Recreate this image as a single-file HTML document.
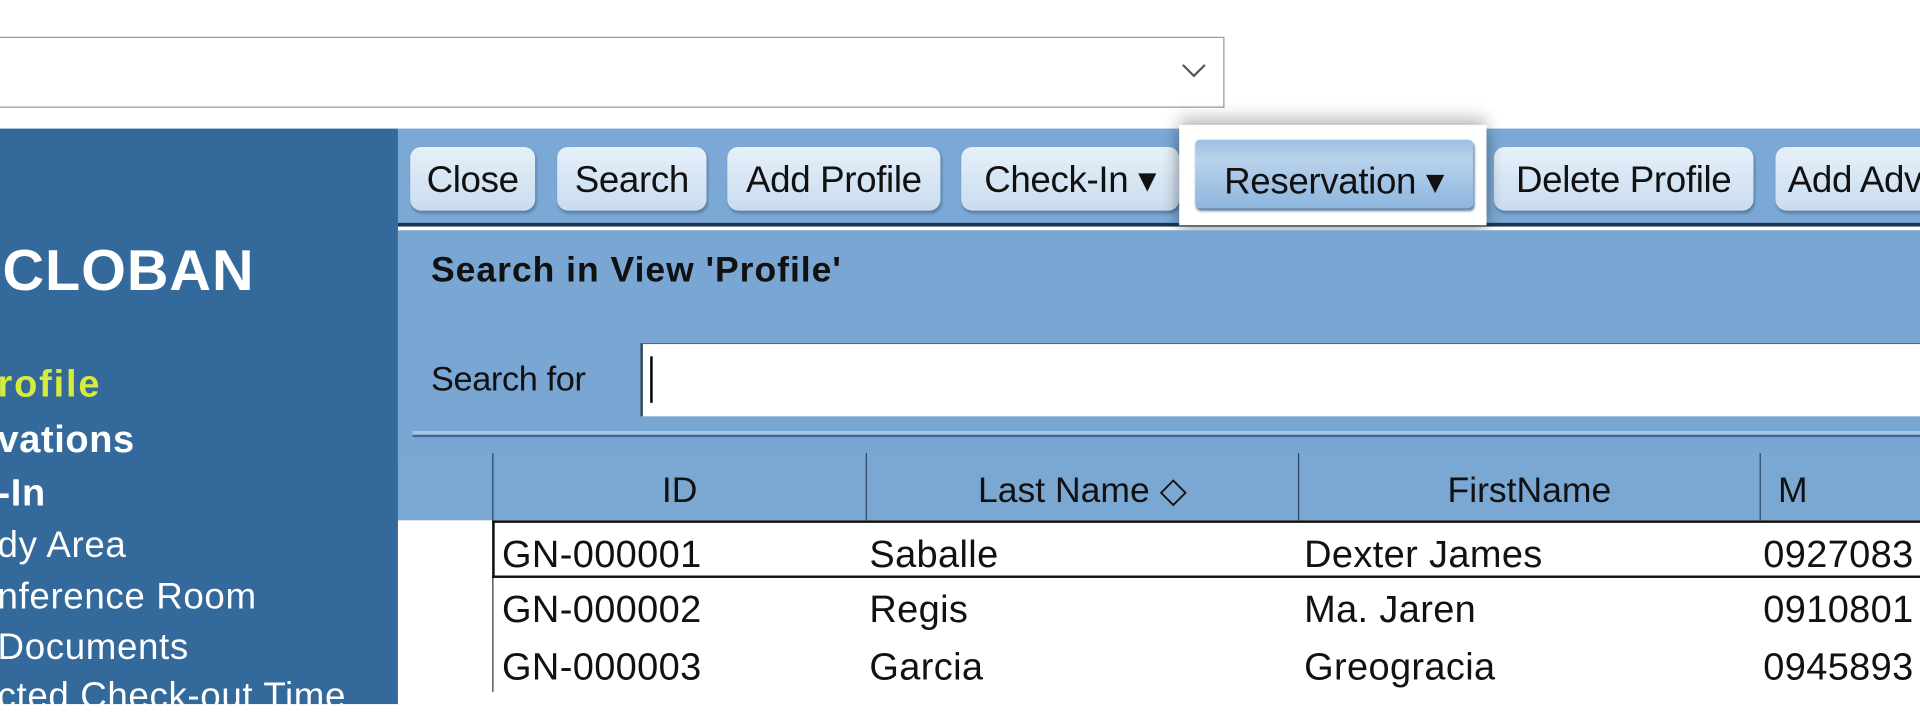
<!DOCTYPE html>
<html><head><meta charset="utf-8"><style>
*{margin:0;padding:0;box-sizing:border-box}
html,body{width:1920px;height:692px;overflow:hidden;background:#fff}
#w{position:absolute;left:0;top:0;width:1568px;height:566px;transform:scale(1.22449);transform-origin:0 0;font-family:"Liberation Sans",Arial,sans-serif}
.a{position:absolute}
.dd{left:-2px;top:30px;width:1002px;height:58px;border:1.5px solid #999;background:#fff}
.side{left:0;top:105px;width:325px;height:470px;background:#346a9b}
.side div{position:absolute;left:0;color:#fff;white-space:nowrap;letter-spacing:0.5px}
.tb{left:325px;top:105px;width:1250px;height:80px;background:#7ca8d5;border-bottom:3px solid #1d3550}
.btn{position:absolute;top:15px;height:52px;border-radius:9px;background:linear-gradient(#e6f0f9,#c9dcef);box-shadow:1px 2px 2px #5a7fa6;font-size:30px;color:#111;line-height:56px;text-align:center;letter-spacing:-0.3px;white-space:nowrap}
.main{left:325px;top:188px;width:1250px;height:190px;background:#79a6d3}
.grid{left:325px;top:370px;width:1250px;height:55px;background:#7ba7d3}
.col{position:absolute;top:0;height:55px;border-left:1.5px solid #2b4763;font-size:29px;text-align:center;line-height:62px;color:#111}
.row{position:absolute;left:402px;width:1170px;height:45px;font-size:31px;color:#111;letter-spacing:0.3px}
.row span{position:absolute;top:8px}
</style></head><body><div id="w">
<div class="a dd"><svg class="a" style="left:965px;top:20px" width="22" height="14"><path d="M2 2 L11 11 L20 2" fill="none" stroke="#555" stroke-width="1.8"/></svg></div>
<div class="a side">
<div style="top:88px;left:2px;font-size:47px;font-weight:bold;letter-spacing:0.8px">CLOBAN</div>
<div style="top:191px;left:-2px;font-size:31px;font-weight:bold;color:#d6ec3c;letter-spacing:1.5px">rofile</div>
<div style="top:236px;left:-2px;font-size:31px;font-weight:bold">vations</div>
<div style="top:280px;left:-2px;font-size:31px;font-weight:bold">-In</div>
<div style="top:324px;left:-2px;font-size:30px">dy Area</div>
<div style="top:366px;left:-2px;font-size:30px">nference Room</div>
<div style="top:407px;left:-2px;font-size:30px">Documents</div>
<div style="top:447px;left:-2px;font-size:30px">cted Check-out Time</div>
</div>
<div class="a tb">
<div class="btn" style="left:10px;width:102px">Close</div>
<div class="btn" style="left:130px;width:122px">Search</div>
<div class="btn" style="left:269px;width:174px">Add Profile</div>
<div class="btn" style="left:460px;width:178px">Check-In ▾</div>
<div class="btn" style="left:895px;width:212px">Delete Profile</div>
<div class="btn" style="left:1125px;width:150px;text-align:left;padding-left:10px">Add Adv</div>
</div>
<div class="a" style="left:963px;top:102px;width:251px;height:82px;background:#fff;box-shadow:0 -6px 12px rgba(0,0,0,.25),0 8px 12px rgba(0,0,0,.25)">
<div class="btn" style="left:13px;top:12px;width:227px;height:56px;line-height:70px;border-radius:4px;background:linear-gradient(#9cc0e2,#b8d2ec 30%,#8db6de)">Reservation ▾</div>
</div>
<div class="a main"></div>
<div class="a" style="left:352px;top:205px;font-size:29px;font-weight:bold;color:#111;letter-spacing:0.8px">Search in View 'Profile'</div>
<div class="a" style="left:352px;top:294px;font-size:28px;color:#111;letter-spacing:-0.3px">Search for</div>
<div class="a" style="left:523px;top:280px;width:1060px;height:60px;background:#fff;border-left:2px solid #2a4460;border-top:1px solid #4a6a8a"><div class="a" style="left:6px;top:10px;width:2px;height:38px;background:#000"></div></div>
<div class="a" style="left:337px;top:352px;width:1240px;height:5px;background:#a8c8e8;border-bottom:2px solid #3d6690"></div>
<div class="a" style="left:325px;top:358px;width:1250px;height:12px;background:#79a6d3"></div>
<div class="a grid">
<div class="col" style="left:77px;width:305px">ID</div>
<div class="col" style="left:382px;width:353px">Last Name ◇</div>
<div class="col" style="left:735px;width:377px">FirstName</div>
<div class="col" style="left:1112px;width:200px;text-align:left;padding-left:14px">M</div>
</div>
<div class="a" style="left:325px;top:425px;width:77px;height:140px;background:#fff"></div>
<div class="a" style="left:402px;top:425px;width:1170px;height:140px;background:#fff;border-left:1.5px solid #333"></div>
<div class="a" style="left:402px;top:425px;width:1170px;height:47px;border:2px solid #111;border-right:none"></div>
<div class="row" style="top:427px"><span style="left:8px">GN-000001</span><span style="left:308px">Saballe</span><span style="left:663px">Dexter James</span><span style="left:1038px">0927083</span></div>
<div class="row" style="top:472px"><span style="left:8px">GN-000002</span><span style="left:308px">Regis</span><span style="left:663px">Ma. Jaren</span><span style="left:1038px">0910801</span></div>
<div class="row" style="top:519px"><span style="left:8px">GN-000003</span><span style="left:308px">Garcia</span><span style="left:663px">Greogracia</span><span style="left:1038px">0945893</span></div>
</div></body></html>
